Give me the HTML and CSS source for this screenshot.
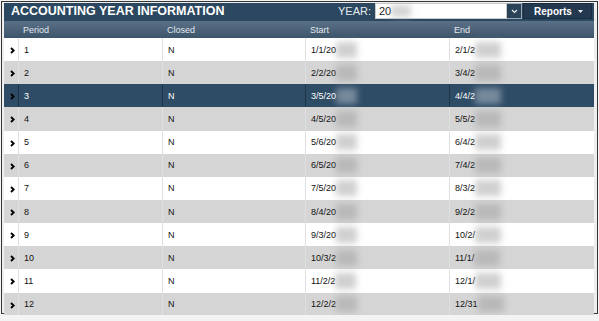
FILE: index.html
```html
<!DOCTYPE html>
<html lang="en">
<head>
    <meta charset="UTF-8">
    <meta name="viewport" content="width=device-width, initial-scale=1.0">
    <title>Accounting Year Information</title>
    <link rel="stylesheet" href="styles.css">
</head>
<body>
    <div class="frame">
        <div class="panel">
            <div class="titlebar">
                <h1 class="title">ACCOUNTING YEAR INFORMATION</h1>
                <div class="year-picker">
                    <label class="year-label" for="year">YEAR:</label>
                    <div class="year-input" id="year"><span>20</span><i class="smudge small"></i></div>
                    <button class="year-drop" type="button">
                        <svg width="7" height="5" viewBox="0 0 7 5"><path d="M1 1l2.5 2.5L6 1" fill="none" stroke="#e8eef3" stroke-width="1.2"/></svg>
                    </button>
                    <button class="reports-btn" type="button">Reports
                        <svg width="5" height="3" viewBox="0 0 5 3"><path d="M0 0h5L2.5 3z" fill="#e8eef3"/></svg>
                    </button>
                </div>
            </div>

            <div class="grid-head">
                <span class="cell"></span>
                <span class="cell">Period</span>
                <span class="cell">Closed</span>
                <span class="cell">Start</span>
                <span class="cell">End</span>
            </div>

            <div class="row"><span class="cell arrow"><svg width="5" height="7" viewBox="0 0 5 7"><path d="M1 1l2.7 2.5L1 6" fill="none" stroke="#000" stroke-width="1.9"/></svg></span><span class="cell">1</span><span class="cell">N</span><span class="cell">1/1/20<i class="smudge"></i></span><span class="cell">2/1/2<i class="smudge wide"></i></span></div>
            <div class="row alt"><span class="cell arrow"><svg width="5" height="7" viewBox="0 0 5 7"><path d="M1 1l2.7 2.5L1 6" fill="none" stroke="#000" stroke-width="1.9"/></svg></span><span class="cell">2</span><span class="cell">N</span><span class="cell">2/2/20<i class="smudge"></i></span><span class="cell">3/4/2<i class="smudge wide"></i></span></div>
            <div class="row selected"><span class="cell arrow"><svg width="5" height="7" viewBox="0 0 5 7"><path d="M1 1l2.7 2.5L1 6" fill="none" stroke="#000" stroke-width="1.9"/></svg></span><span class="cell">3</span><span class="cell">N</span><span class="cell">3/5/20<i class="smudge"></i></span><span class="cell">4/4/2<i class="smudge wide"></i></span></div>
            <div class="row alt"><span class="cell arrow"><svg width="5" height="7" viewBox="0 0 5 7"><path d="M1 1l2.7 2.5L1 6" fill="none" stroke="#000" stroke-width="1.9"/></svg></span><span class="cell">4</span><span class="cell">N</span><span class="cell">4/5/20<i class="smudge"></i></span><span class="cell">5/5/2<i class="smudge wide"></i></span></div>
            <div class="row"><span class="cell arrow"><svg width="5" height="7" viewBox="0 0 5 7"><path d="M1 1l2.7 2.5L1 6" fill="none" stroke="#000" stroke-width="1.9"/></svg></span><span class="cell">5</span><span class="cell">N</span><span class="cell">5/6/20<i class="smudge"></i></span><span class="cell">6/4/2<i class="smudge wide"></i></span></div>
            <div class="row alt"><span class="cell arrow"><svg width="5" height="7" viewBox="0 0 5 7"><path d="M1 1l2.7 2.5L1 6" fill="none" stroke="#000" stroke-width="1.9"/></svg></span><span class="cell">6</span><span class="cell">N</span><span class="cell">6/5/20<i class="smudge"></i></span><span class="cell">7/4/2<i class="smudge wide"></i></span></div>
            <div class="row"><span class="cell arrow"><svg width="5" height="7" viewBox="0 0 5 7"><path d="M1 1l2.7 2.5L1 6" fill="none" stroke="#000" stroke-width="1.9"/></svg></span><span class="cell">7</span><span class="cell">N</span><span class="cell">7/5/20<i class="smudge"></i></span><span class="cell">8/3/2<i class="smudge wide"></i></span></div>
            <div class="row alt"><span class="cell arrow"><svg width="5" height="7" viewBox="0 0 5 7"><path d="M1 1l2.7 2.5L1 6" fill="none" stroke="#000" stroke-width="1.9"/></svg></span><span class="cell">8</span><span class="cell">N</span><span class="cell">8/4/20<i class="smudge"></i></span><span class="cell">9/2/2<i class="smudge wide"></i></span></div>
            <div class="row"><span class="cell arrow"><svg width="5" height="7" viewBox="0 0 5 7"><path d="M1 1l2.7 2.5L1 6" fill="none" stroke="#000" stroke-width="1.9"/></svg></span><span class="cell">9</span><span class="cell">N</span><span class="cell">9/3/20<i class="smudge"></i></span><span class="cell">10/2/<i class="smudge wide"></i></span></div>
            <div class="row alt"><span class="cell arrow"><svg width="5" height="7" viewBox="0 0 5 7"><path d="M1 1l2.7 2.5L1 6" fill="none" stroke="#000" stroke-width="1.9"/></svg></span><span class="cell">10</span><span class="cell">N</span><span class="cell">10/3/2<i class="smudge"></i></span><span class="cell">11/1/<i class="smudge wide"></i></span></div>
            <div class="row"><span class="cell arrow"><svg width="5" height="7" viewBox="0 0 5 7"><path d="M1 1l2.7 2.5L1 6" fill="none" stroke="#000" stroke-width="1.9"/></svg></span><span class="cell">11</span><span class="cell">N</span><span class="cell">11/2/2<i class="smudge"></i></span><span class="cell">12/1/<i class="smudge wide"></i></span></div>
            <div class="row alt"><span class="cell arrow"><svg width="5" height="7" viewBox="0 0 5 7"><path d="M1 1l2.7 2.5L1 6" fill="none" stroke="#000" stroke-width="1.9"/></svg></span><span class="cell">12</span><span class="cell">N</span><span class="cell">12/2/2<i class="smudge"></i></span><span class="cell">12/31<i class="smudge wide"></i></span></div>
        </div>
    </div>
</body>
</html>
```

FILE: styles.css
```css
body {
    margin: 0;
    background-color: #f3f3f3;
    font-family: "Liberation Sans", Arial, sans-serif;
}
.frame {
    margin: 1px;
    border: 1px solid #353535;
    padding: 1px 3px 2px 2px;
    background-color: #eeeeee;
    height: 313px;
    box-sizing: border-box;
}
.panel {
    width: 590px;
}

/* title bar */
.titlebar {
    display: flex;
    align-items: flex-start;
    height: 18px;
    background-color: #2c4760;
    padding-right: 2px;
}
.title {
    margin: 0;
    padding-left: 7px;
    font-size: 12.5px;
    line-height: 17px;
    font-weight: bold;
    color: #ffffff;
}
.year-picker {
    display: flex;
    align-items: flex-start;
    margin-left: auto;
}
.year-label {
    font-size: 11px;
    line-height: 16px;
    color: #e3e9ee;
    margin-right: 4px;
}
.year-input {
    display: flex;
    align-items: center;
    width: 132px;
    height: 16px;
    box-sizing: border-box;
    padding-left: 3px;
    background-color: #ffffff;
    border: 1px solid #c9c9c9;
    font-size: 11px;
    color: #222;
}
.year-drop {
    display: flex;
    align-items: center;
    justify-content: center;
    width: 15px;
    height: 16px;
    padding: 0;
    background-color: #2a4359;
    border: 1px solid #9aa8b4;
    border-left: none;
}
.reports-btn {
    display: flex;
    align-items: center;
    gap: 6px;
    width: 69px;
    height: 16px;
    margin-left: 1px;
    padding: 1px 0 0 10px;
    box-sizing: border-box;
    background-color: #223950;
    border: 1px solid #1a2d40;
    color: #ffffff;
    font-family: "Liberation Sans", Arial, sans-serif;
    font-size: 10px;
    font-weight: bold;
}

/* grid */
.grid-head,
.row {
    display: grid;
    grid-template-columns: 14px 144px 143px 144px 145px;
}
.grid-head {
    height: 17px;
    background: linear-gradient(#5a7087, #3d556b);
}
.grid-head .cell {
    border-left: none;
    color: #e2e8ed;
}
.cell {
    display: flex;
    align-items: center;
    padding-left: 5px;
    border-left: 1px solid #e0e0e0;
    font-size: 9px;
    color: #111111;
    white-space: nowrap;
    box-sizing: border-box;
}
.cell:first-child {
    border-left: none;
    padding-left: 0;
}
.row {
    height: 23.15px;
    background-color: #ffffff;
}
.row.alt {
    background-color: #d5d5d5;
}
.row.selected {
    background-color: #2e4c66;
}
.row.selected .cell {
    color: #ffffff;
    border-left-color: #1f3649;
}
.cell.arrow {
    padding: 2px 0 0 6px;
}
.smudge {
    display: inline-block;
    width: 21px;
    height: 16px;
    background-color: rgba(150, 150, 150, 0.45);
    filter: blur(3px);
}
.smudge.wide {
    width: 26px;
}
.smudge.small {
    width: 20px;
    height: 12px;
    background-color: rgba(170, 170, 170, 0.5);
}
.row.selected .smudge {
    background-color: rgba(190, 200, 210, 0.5);
}
```
